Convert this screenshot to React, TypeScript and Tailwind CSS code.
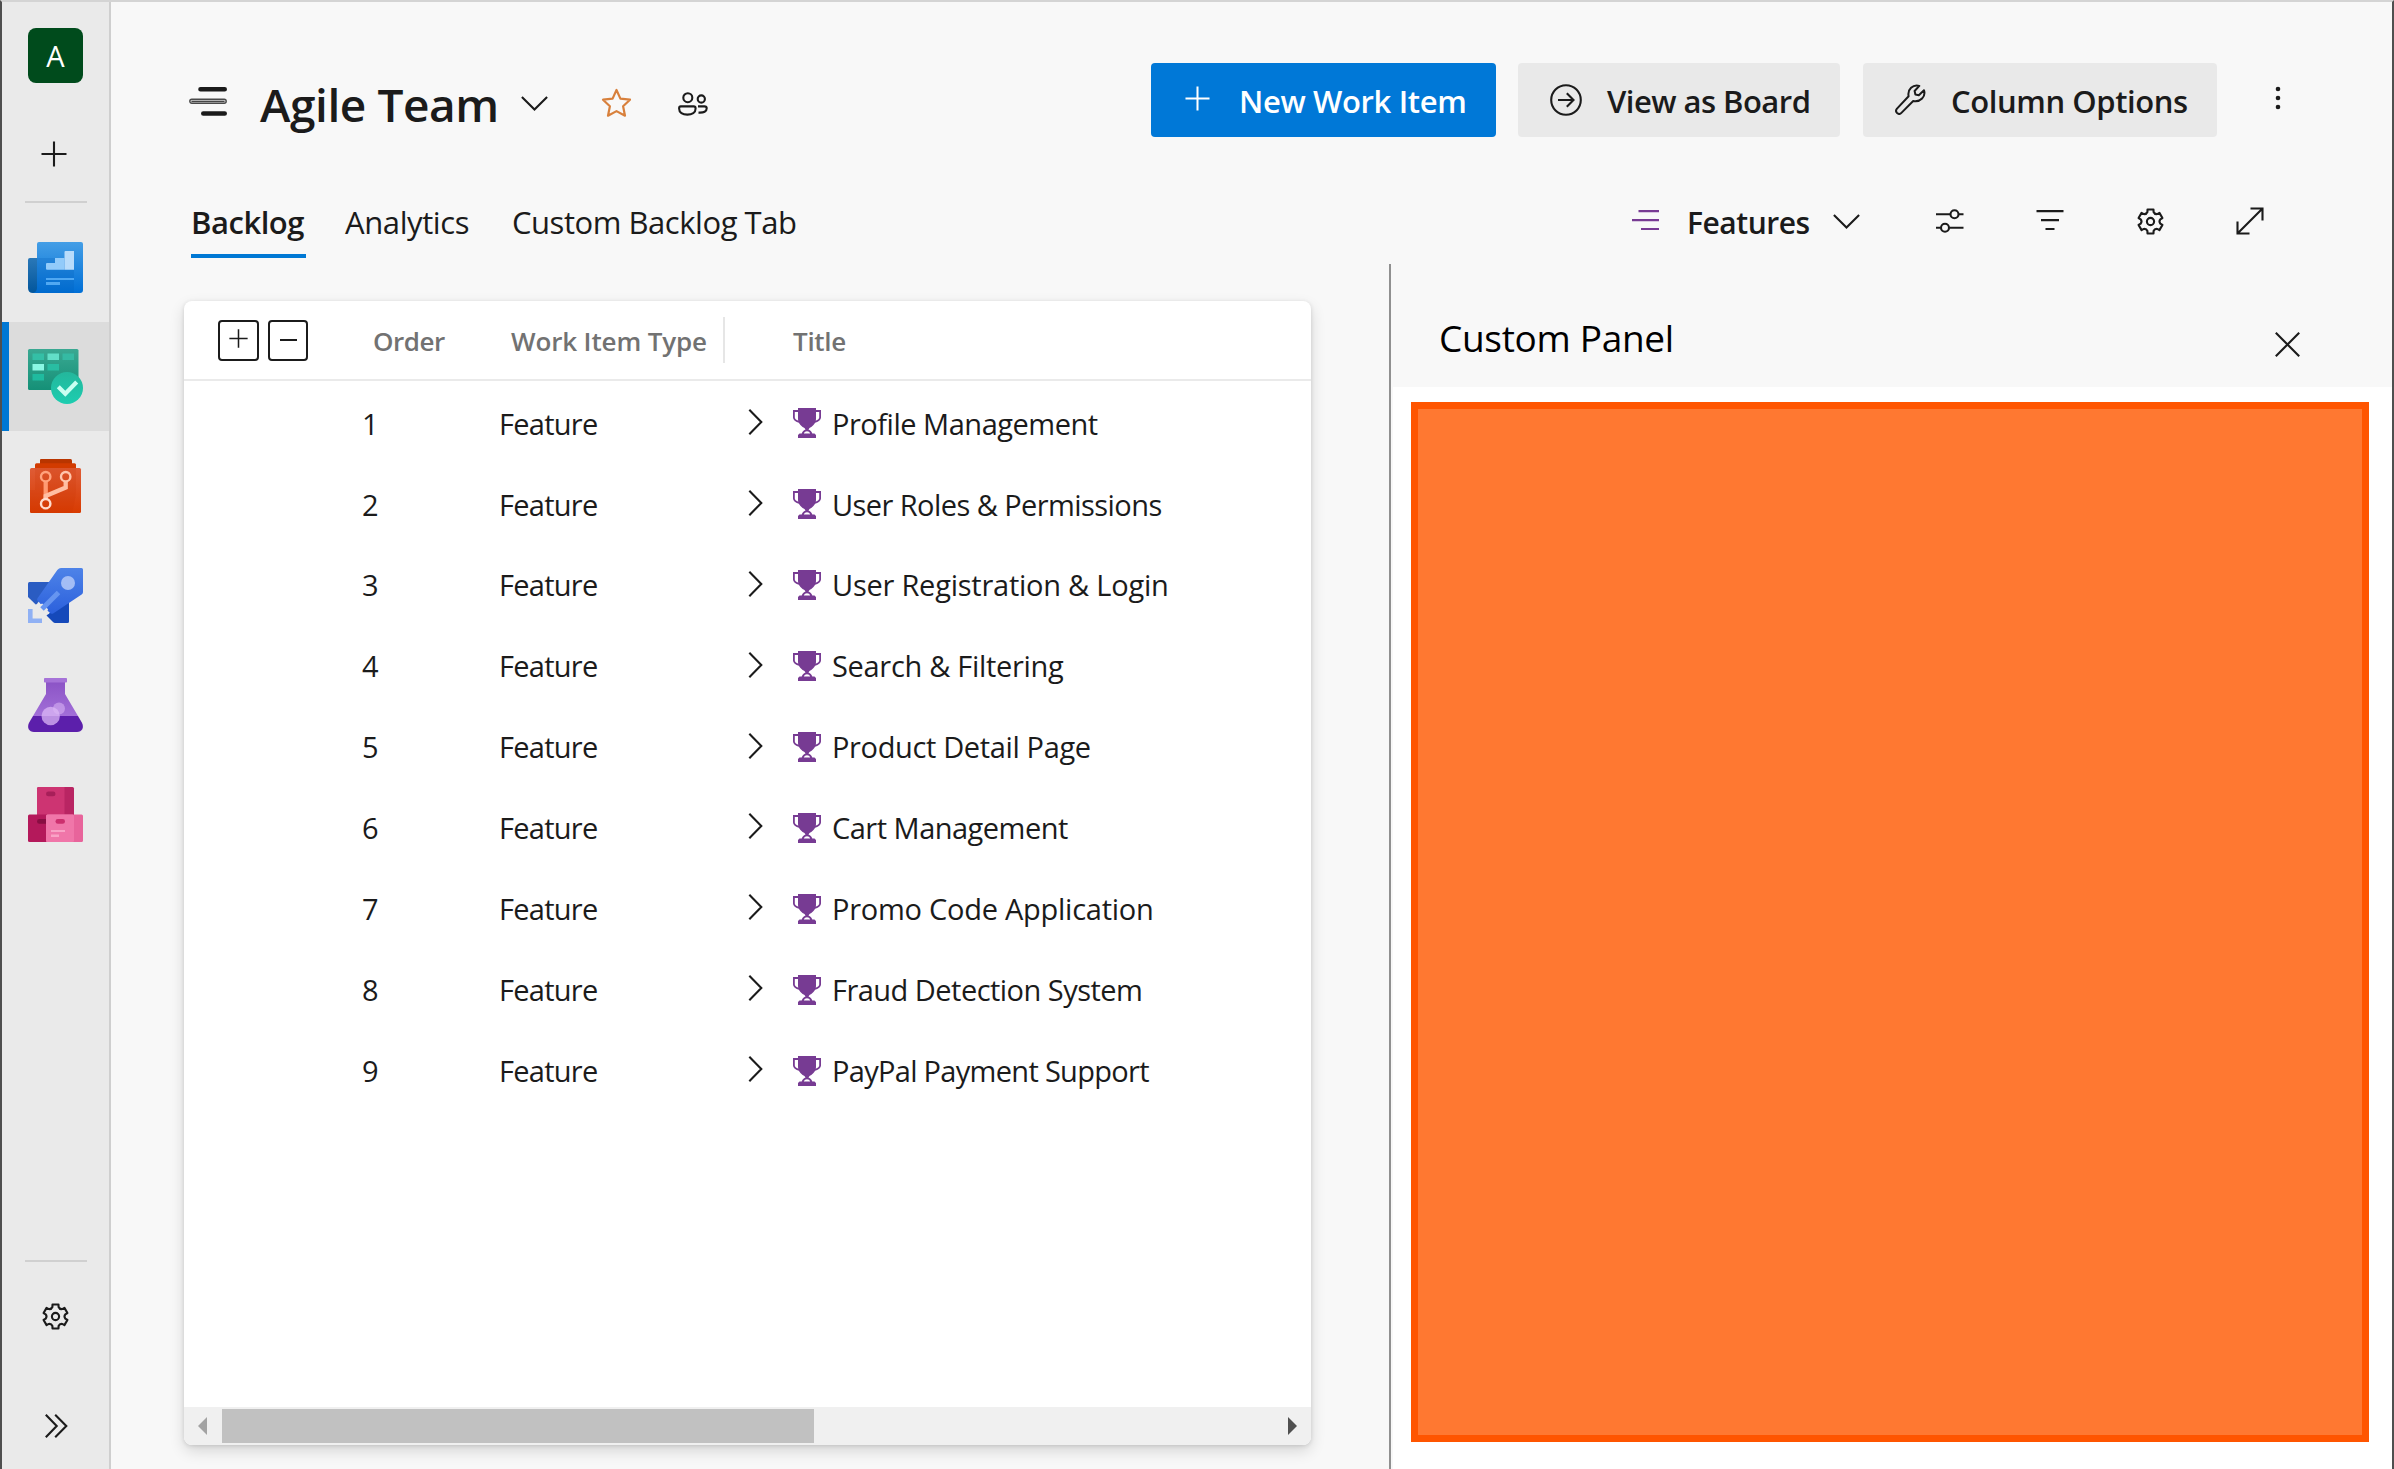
import React from "react";

const INK = "#1b1b1b";

const polar = (r: number, deg: number) => {
  const a = ((deg - 90) * Math.PI) / 180;
  return `${(13.5 + r * Math.cos(a)).toFixed(2)} ${(13.5 + r * Math.sin(a)).toFixed(2)}`;
};

const GEAR_PATH =
  [0, 60, 120, 180, 240, 300]
    .map(
      (a, i) =>
        `${i === 0 ? "M" : "L"}${polar(12.4, a - 14)}L${polar(12.4, a + 14)}L${polar(10, a + 18)}Q${polar(8.2, a + 30)} ${polar(10, a + 42)}`
    )
    .join("") + "Z";

function Gear() {
  return (
    <svg width="27" height="27" viewBox="0 0 27 27" fill="none" stroke={INK} strokeWidth="2.1" strokeLinejoin="round">
      <path d={GEAR_PATH} />
      <circle cx="13.5" cy="13.5" r="3.6" />
    </svg>
  );
}

function Plus({ size, color = INK, className = "" }: { size: number; color?: string; className?: string }) {
  return (
    <svg width={size} height={size} viewBox="0 0 26 26" fill="none" stroke={color} strokeWidth="2.1" className={className}>
      <path d="M13 .5V25.5M.5 13H25.5" />
    </svg>
  );
}

function ChevronDown({ className = "" }: { className?: string }) {
  return (
    <svg width="27" height="15" viewBox="0 0 27 15" fill="none" stroke={INK} strokeWidth="2.1" className={className}>
      <path d="M.9 .9L13.5 13.4L26.1 .9" />
    </svg>
  );
}

function OverviewIcon() {
  return (
    <svg width="55" height="55" viewBox="0 0 55 55" className="overflow-visible">
      <defs>
        <linearGradient id="ov-a" x1="0" y1="0" x2="0" y2="1">
          <stop offset="0" stopColor="#449ee6" />
          <stop offset="1" stopColor="#006fd6" />
        </linearGradient>
        <linearGradient id="ov-b" x1="0" y1="0" x2="0" y2="1">
          <stop offset="0" stopColor="#2a78b8" />
          <stop offset="1" stopColor="#02569c" />
        </linearGradient>
      </defs>
      <path d="M2 18H9V53H5Q0 53 0 48V20Q0 18 2 18Z" fill="url(#ov-b)" />
      <path d="M11 2H53Q55 2 55 4V50Q55 53 52 53H5Q9 52 9 48V4Q9 2 11 2Z" fill="url(#ov-a)" />
      <path d="M9 18H46V53H5Q9 52 9 48Z" fill="#005cb8" opacity=".22" />
      <path d="M19 23H27V18H36.5V29.7H19Q18 29.7 18 28.7V24Q18 23 19 23Z" fill="#92cbfa" />
      <path d="M37.5 11H46V29.7H36.5V12Q36.5 11 37.5 11Z" fill="#b8dcfb" />
      <path d="M18 38H46V40H18ZM18 42H32V45H18Z" fill="#50a8f2" />
    </svg>
  );
}

function BoardsIcon() {
  return (
    <svg width="55" height="55" viewBox="0 0 55 55" className="overflow-visible">
      <defs>
        <linearGradient id="bd-a" x1="0" y1="0" x2="0" y2="1">
          <stop offset="0" stopColor="#3aa892" />
          <stop offset="1" stopColor="#159077" />
        </linearGradient>
        <linearGradient id="bd-b" x1="0" y1="0" x2="0" y2="1">
          <stop offset="0" stopColor="#24b79c" />
          <stop offset="1" stopColor="#1dcdb0" />
        </linearGradient>
      </defs>
      <rect width="50.5" height="41" rx="1.5" fill="url(#bd-a)" />
      <rect x="4.5" y="4.5" width="11.5" height="6.5" fill="#34bfa6" />
      <rect x="19.5" y="4.5" width="11.5" height="6.5" fill="#62dfc8" />
      <rect x="34.5" y="4.5" width="11.5" height="6.5" fill="#35baa3" />
      <rect x="4.5" y="15" width="11.5" height="6.5" fill="#8bf8e4" />
      <rect x="19.5" y="15" width="11.5" height="6.5" fill="#29bda2" />
      <rect x="4.5" y="25" width="11.5" height="6.5" fill="#1fbb9f" />
      <circle cx="39" cy="39" r="16" fill="url(#bd-b)" />
      <path d="M30.3 37.8L37.3 44.8L48.7 33" fill="none" stroke="#c9fff2" strokeWidth="4.2" />
    </svg>
  );
}

function ReposIcon() {
  return (
    <svg width="55" height="55" viewBox="0 0 55 55" className="overflow-visible">
      <defs>
        <linearGradient id="rp-a" x1="0" y1="0" x2="0" y2="1">
          <stop offset="0" stopColor="#df5c36" />
          <stop offset="1" stopColor="#d83b01" />
        </linearGradient>
      </defs>
      <path d="M13 1H42.5Q44 1 44 2.5V6H12V2Q12 1 13 1Z" fill="#b93500" />
      <path d="M8.5 5.3H46.5Q48 5.3 48 6.8V12H7V6.8Q7 5.3 8.5 5.3Z" fill="#d23b00" />
      <rect x="2" y="10" width="51" height="45" rx="1.5" fill="url(#rp-a)" />
      <path d="M7 10H48V32Q48 40 44 55H2V32H7Z" fill="#c93200" opacity=".18" />
      <path d="M17.7 23V40" stroke="#ff9a72" strokeWidth="4.3" />
      <path d="M37.7 23V29.5L17.7 38V41" fill="none" stroke="#ffbea2" strokeWidth="4.3" />
      <circle cx="17.7" cy="18.7" r="4.7" fill="none" stroke="#ffa27c" strokeWidth="2.4" />
      <circle cx="37.7" cy="18.7" r="4.7" fill="none" stroke="#ffc5ab" strokeWidth="2.4" />
      <circle cx="17.7" cy="45.7" r="4.7" fill="none" stroke="#ffdccd" strokeWidth="2.4" />
    </svg>
  );
}

function PipelinesIcon() {
  return (
    <svg width="55" height="55" viewBox="0 0 55 55" className="overflow-visible">
      <defs>
        <linearGradient id="pp-a" x1="0" y1="0" x2="0" y2="1">
          <stop offset="0" stopColor="#4e83e8" />
          <stop offset="1" stopColor="#2b60dc" />
        </linearGradient>
      </defs>
      <path d="M1.5 15H23L9 37L7.7 37.5L0 30V16.5Q0 15 1.5 15Z" fill="#2a5cc2" />
      <path d="M41 34V54.5Q41 56 39.5 56H27Q26 56 25 55L18.5 48.5L24 44Z" fill="#1549ba" />
      <path d="M33 1H53.5Q55 1 55 2.5V25Q55 26.5 54 27.3L25.5 46.3Q23.5 47.5 22 46L9.8 34.3Q8.5 33 9.5 31.3L29.3 3Q31 1 33 1Z" fill="url(#pp-a)" />
      <path d="M10.5 36L12 38.5L14 37.5L19 42.5L18 44.5L21 46.5" fill="none" stroke="#e9e9e9" strokeWidth="1.8" />
      <path d="M30.5 25.5L14 42" stroke="#6695f0" strokeWidth="5" />
      <circle cx="40" cy="16" r="7" fill="#a3bdf5" />
      <path d="M2.3 42V53.7H14" fill="none" stroke="#90b1f4" strokeWidth="4.6" />
    </svg>
  );
}

function TestPlansIcon() {
  return (
    <svg width="55" height="55" viewBox="0 0 55 55" className="overflow-visible">
      <defs>
        <linearGradient id="tp-a" x1="0" y1="0" x2="0" y2="1">
          <stop offset="0" stopColor="#8c54c6" />
          <stop offset="1" stopColor="#a26fd8" />
        </linearGradient>
      </defs>
      <path d="M18 6V18L5 40H50L37 18V6Z" fill="url(#tp-a)" />
      <path d="M5 40H50L53.8 46.5C56.5 51.5 54 56 49 56H6C1 56 -1.5 51.5 1.2 46.5Z" fill="#5c1fab" />
      <rect x="16" y="2" width="23" height="4.6" rx=".8" fill="#a673d8" />
      <circle cx="22.7" cy="40" r="9.2" fill="#dcb8f6" opacity=".75" />
      <circle cx="31" cy="32.5" r="6" fill="#dcb8f6" opacity=".55" />
    </svg>
  );
}

function ArtifactsIcon() {
  return (
    <svg width="55" height="55" viewBox="0 0 55 55" className="overflow-visible">
      <rect x="9" y="2" width="37" height="29" rx="1.5" fill="#b92563" />
      <path d="M10.5 2H36.5V31H9V3.5Q9 2 10.5 2Z" fill="#cd3472" />
      <rect x="18" y="6.5" width="9.5" height="4.8" rx="2.4" fill="#a71f59" />
      <rect x="0" y="29.5" width="22" height="27.5" rx="1.5" fill="#b4195b" />
      <rect x="9" y="34" width="12" height="4.8" rx="2.4" fill="#880e42" />
      <rect x="18" y="29.5" width="37" height="27.5" rx="1.5" fill="#e8649b" />
      <rect x="18" y="29.5" width="28" height="27.5" rx="1.5" fill="#f076a9" />
      <rect x="27.5" y="34" width="9.5" height="4.8" rx="2.4" fill="#cc2f6e" />
      <path d="M23 45H37V47H23ZM23 49.5H31V52H23Z" fill="#f9a3c6" />
    </svg>
  );
}

function Trophy() {
  return (
    <svg width="28" height="30" viewBox="0 0 28 30" className="ml-[30px] shrink-0">
      <path
        fill="#773b93"
        fillRule="evenodd"
        d="M5 0H23V11C23 16 18.5 19 16.5 20L15.5 21.5C17.5 22.5 19 24 19.3 25.5H21.5L23 27V30H5V27L6.5 25.5H8.7C9 24 10.5 22.5 12.5 21.5L11.5 20C9.5 19 5 16 5 11ZM10.8 25.6H17.2C16.6 24 15.4 23.3 14 23.3S11.4 24 10.8 25.6Z"
      />
      <path d="M5 3H.9V9.5Q1 12.3 6 13.8M23 3H27.1V9.5Q27 12.3 22 13.8" fill="none" stroke="#773b93" strokeWidth="1.8" />
    </svg>
  );
}

const services = [
  { name: "Overview", icon: <OverviewIcon /> },
  { name: "Boards", icon: <BoardsIcon />, active: true },
  { name: "Repos", icon: <ReposIcon /> },
  { name: "Pipelines", icon: <PipelinesIcon /> },
  { name: "Test Plans", icon: <TestPlansIcon /> },
  { name: "Artifacts", icon: <ArtifactsIcon /> },
];

function Sidebar() {
  return (
    <nav className="flex w-[109px] shrink-0 flex-col items-center border-r-2 border-[#cfcfcf] bg-[#eaeaea]">
      <div className="mt-[26px] flex size-[55px] items-center justify-center rounded-[8px] bg-[#004b1c] text-[29px] text-white">A</div>
      <Plus size={26} className="mt-[58px] -ml-[3px]" />
      <div className="mt-[34px] mb-[10px] h-[2px] w-[62px] bg-[#d0d0d0]" />
      {services.map((s) => (
        <div
          key={s.name}
          aria-label={s.name}
          className={
            s.active
              ? "flex h-[109px] w-full items-center justify-center border-l-[7px] border-[#0078d4] bg-[#dcdcdc] pr-[7px]"
              : "flex h-[109px] w-full items-center justify-center"
          }
        >
          {s.icon}
        </div>
      ))}
      <div className="mt-auto h-[2px] w-[62px] bg-[#d0d0d0]" />
      <div className="flex h-[109px] items-center">
        <Gear />
      </div>
      <svg width="23" height="24" viewBox="0 0 23 24" fill="none" stroke={INK} strokeWidth="2.1" className="mt-[43px] mb-[31px] ml-px">
        <path d="M.8 .8L11.7 12L.8 23.2M10.2 .8L21.3 12L10.2 23.2" />
      </svg>
    </nav>
  );
}

function TitleRow() {
  return (
    <div className="mt-[61px] flex h-[74px] items-center">
      <svg width="38" height="29" viewBox="0 0 38 29" className="mt-[3px] ml-[78px]">
        <path d="M11.5 2.3H35.7M14.3 26.5H35.7" stroke={INK} strokeWidth="4.6" strokeLinecap="round" />
        <rect x=".8" y="12.3" width="36.4" height="4" rx="2" fill="#d8d8d8" stroke="#4a4a4a" strokeWidth="1.4" />
        <path d="M2.5 14.3H35.5" stroke="#222" strokeWidth="1" />
      </svg>
      <h1 className="mt-[8px] ml-[33px] w-[240px] text-[46px] leading-none font-semibold tracking-[-0.43px] whitespace-nowrap">Agile Team</h1>
      <ChevronDown className="mt-[7px] ml-[21px]" />
      <svg width="31" height="30" viewBox="0 0 31 30" fill="none" stroke="#d8803c" strokeWidth="2.2" strokeLinejoin="round" className="mt-[5px] ml-[53px]">
        <path d="M15.5 2L19.4 10.6L29 11.7L22.1 18.3L24 27.7L15.5 23.1L7 27.7L8.9 18.3L2 11.7L11.6 10.6Z" />
      </svg>
      <svg width="30" height="24" viewBox="0 0 30 24" fill="none" stroke={INK} strokeWidth="2.1" className="mt-[7px] ml-[46px]">
        <circle cx="9.8" cy="5.7" r="4.5" />
        <circle cx="23.3" cy="7" r="3.6" />
        <path d="M2.8 14.4H15.7Q17.6 14.4 17.6 16.4C17.6 20.5 14 22.6 9.3 22.6S1.1 20.5 1.1 16.4Q1.1 14.4 2.8 14.4Z" />
        <path d="M20 14.4H26.5Q28.7 14.4 28.7 16.3C28.7 19.6 26 20.9 20.5 20.6" />
      </svg>
      <button className="ml-auto flex h-[74px] w-[345px] items-center rounded-[4px] bg-[#0078d7] pt-[2px] pl-[34px] text-[31px] font-semibold whitespace-nowrap text-white">
        <Plus size={25} color="#fff" className="mb-[5px] shrink-0" />
        <span className="ml-[29px] tracking-[-0.36px]">New Work Item</span>
      </button>
      <button className="ml-[22px] flex h-[74px] w-[322px] items-center rounded-[4px] bg-[#e9e9e9] pt-[2px] pl-[32px] text-[31px] font-semibold whitespace-nowrap">
        <svg width="32" height="32" viewBox="0 0 32 32" fill="none" stroke={INK} strokeWidth="2.1" className="mb-[2px] shrink-0">
          <circle cx="16" cy="16" r="14.8" />
          <path d="M8 16H23.5M16.8 9.3L23.5 16L16.8 22.7" />
        </svg>
        <span className="ml-[25px] tracking-[-0.53px]">View as Board</span>
      </button>
      <button className="ml-[23px] flex h-[74px] w-[354px] items-center rounded-[4px] bg-[#e9e9e9] pt-[2px] pl-[32px] text-[31px] font-semibold whitespace-nowrap">
        <svg width="31" height="31" viewBox="0 0 31 31" fill="none" stroke={INK} strokeWidth="2" strokeLinejoin="round" className="mb-[3px] shrink-0">
          <path d="M24.3 1.9C18 .2 12.2 5.2 13.6 12.2L2 24.6C.8 26 .9 27.8 2.1 29C3.4 30.2 5.2 30.1 6.4 28.9L18.2 17C25.5 18.4 31 12.5 29 6.2L23.8 11.2L20.4 10.6L19.6 7Z" />
        </svg>
        <span className="ml-[25px] tracking-[-0.42px]">Column Options</span>
      </button>
      <svg width="8" height="24" viewBox="0 0 8 24" fill={INK} className="mr-[110px] mb-[4px] ml-[57px]">
        <circle cx="4" cy="3" r="2.3" />
        <circle cx="4" cy="12" r="2.3" />
        <circle cx="4" cy="21" r="2.3" />
      </svg>
    </div>
  );
}

function TabRow() {
  return (
    <div className="mt-[51px] flex h-[70px] text-[31px] leading-[66px] whitespace-nowrap">
      <div className="ml-[80px] h-[70px] w-[115px] border-b-4 border-[#0078d4] pt-px font-semibold tracking-[-0.47px]">Backlog</div>
      <div className="ml-[39px] w-[125px] pt-px tracking-[-0.4px]">Analytics</div>
      <div className="ml-[42px] pt-px tracking-[-0.46px]">Custom Backlog Tab</div>
      <div className="ml-auto flex h-[66px] items-center pr-[128px]">
        <svg width="27" height="20" viewBox="0 0 27 20" stroke="#773b93" strokeWidth="2.2" className="-mt-[2px]">
          <path d="M6.5 1.2H27M0 10.1H27M9 19H27" />
        </svg>
        <span className="ml-[28px] w-[146px] pt-[3px] text-[30px] font-semibold tracking-[-0.46px]">Features</span>
        <ChevronDown />
        <svg width="28" height="24" viewBox="0 0 28 24" fill="none" stroke={INK} strokeWidth="2.1" className="ml-[76px]">
          <path d="M0 5.3H14M23 5.3H27.5M0 18.7H4.5M13.5 18.7H27.5" />
          <circle cx="18.5" cy="5.3" r="4" />
          <circle cx="9" cy="18.7" r="4" />
        </svg>
        <svg width="28" height="20" viewBox="0 0 28 20" stroke={INK} strokeWidth="2.2" className="-mt-[2px] ml-[72px]">
          <path d="M.5 1.2H27.5M5 10.1H23M9.5 19H18.5" />
        </svg>
        <div className="ml-[73px] w-[28px]">
          <Gear />
        </div>
        <svg width="28" height="28" viewBox="0 0 28 28" fill="none" stroke={INK} strokeWidth="2.1" className="ml-[71px]">
          <path d="M2 26L26.5 1.5M14.5 1.5H26.5V13.5M1.5 14.5V26.5H13.5" />
        </svg>
      </div>
    </div>
  );
}

const features = [
  { title: "Profile Management", tracking: "tracking-[-0.48px]" },
  { title: "User Roles & Permissions", tracking: "tracking-[-0.57px]" },
  { title: "User Registration & Login", tracking: "tracking-[-0.24px]" },
  { title: "Search & Filtering", tracking: "tracking-[-0.31px]" },
  { title: "Product Detail Page", tracking: "tracking-[-0.36px]" },
  { title: "Cart Management", tracking: "tracking-[-0.51px]" },
  { title: "Promo Code Application", tracking: "tracking-[-0.26px]" },
  { title: "Fraud Detection System", tracking: "tracking-[-0.53px]" },
  { title: "PayPal Payment Support", tracking: "tracking-[-0.7px]" },
];

function BacklogGrid() {
  return (
    <section className="mt-[37px] ml-[73px] flex h-[1144px] w-[1127px] shrink-0 flex-col overflow-hidden rounded-[8px] bg-white shadow-[0_6px_15px_rgba(0,0,0,0.14),0_1px_4px_rgba(0,0,0,0.12)]">
      <div className="flex h-[80px] shrink-0 items-center border-b-2 border-[#eaeaea] text-[26px] font-semibold whitespace-nowrap text-[#727272]">
        <div className="ml-[34px] flex h-[41px] w-[41px] items-center justify-center rounded-[4px] border-2 border-[#1b1b1b] pr-px pb-[3px]">
          <Plus size={19} />
        </div>
        <div className="ml-[9px] flex h-[41px] w-[40px] items-center justify-center rounded-[4px] border-2 border-[#1b1b1b]">
          <div className="h-[2px] w-[17px] bg-[#1b1b1b]" />
        </div>
        <div className="ml-[65px] w-[138px] pt-[2px] tracking-[-0.46px]">Order</div>
        <div className="w-[212px] pt-[2px] tracking-[-0.14px]">Work Item Type</div>
        <div className="h-[46px] w-[2px] bg-[#e6e6e6]" />
        <div className="ml-[68px] pt-[2px] tracking-[-0.29px]">Title</div>
      </div>
      <div className="flex-1 pt-[2px] text-[29px] whitespace-nowrap">
        {features.map((f, i) => (
          <div key={f.title} className="flex h-[80.9px] items-center">
            <span className="ml-[178px] w-[137px]">{i + 1}</span>
            <span className="w-[249px] tracking-[-0.74px]">Feature</span>
            <svg width="15" height="26" viewBox="0 0 15 26" fill="none" stroke={INK} strokeWidth="2.1" className="mb-[3px] shrink-0">
              <path d="M1.3 .8L13.3 13L1.3 25.2" />
            </svg>
            <Trophy />
            <span className={`ml-[11px] ${f.tracking}`}>{f.title}</span>
          </div>
        ))}
      </div>
      <div className="flex h-[38px] shrink-0 items-center bg-[#f0f0f0]">
        <svg width="9" height="18" viewBox="0 0 9 18" fill="#a3a3a3" className="ml-[14px]">
          <path d="M9 0V18L0 9Z" />
        </svg>
        <div className="ml-[15px] h-[34px] w-[592px] bg-[#c1c1c1]" />
        <svg width="9" height="18" viewBox="0 0 9 18" fill="#505050" className="mr-[14px] ml-auto">
          <path d="M0 0V18L9 9Z" />
        </svg>
      </div>
    </section>
  );
}

function CustomPanel() {
  return (
    <aside className="ml-auto flex w-[1003px] shrink-0 flex-col border-l-2 border-[#909090]">
      <div className="flex h-[123px] shrink-0 items-center pt-[24px] text-black">
        <h2 className="ml-[48px] text-[37px] leading-none tracking-[-0.32px]">Custom Panel</h2>
        <svg width="25" height="25" viewBox="0 0 25 25" fill="none" stroke="#1b1b1b" strokeWidth="2.1" className="mt-[13px] mr-[92px] ml-auto">
          <path d="M.8 .8L24.2 24.2M24.2 .8L.8 24.2" />
        </svg>
      </div>
      <div className="ml-[2px] flex-1 bg-white pt-[15px] pr-[23px] pl-[18px]">
        <div className="h-[1040px] border-[7px] border-[#ff5500] bg-[#ff7831]" />
      </div>
    </aside>
  );
}

export default function App() {
  return (
    <div className="flex h-[1469px] w-[2394px] overflow-hidden border-x-2 border-t-2 border-x-[#4f4f4f] border-t-[#d4d4d4] bg-[#f8f8f8] font-['Open_Sans','Noto_Sans',sans-serif] text-[#1b1b1b]">
      <Sidebar />
      <main className="flex min-w-0 flex-1 flex-col">
        <TitleRow />
        <TabRow />
        <div className="mt-[6px] flex flex-1">
          <BacklogGrid />
          <CustomPanel />
        </div>
      </main>
    </div>
  );
}
